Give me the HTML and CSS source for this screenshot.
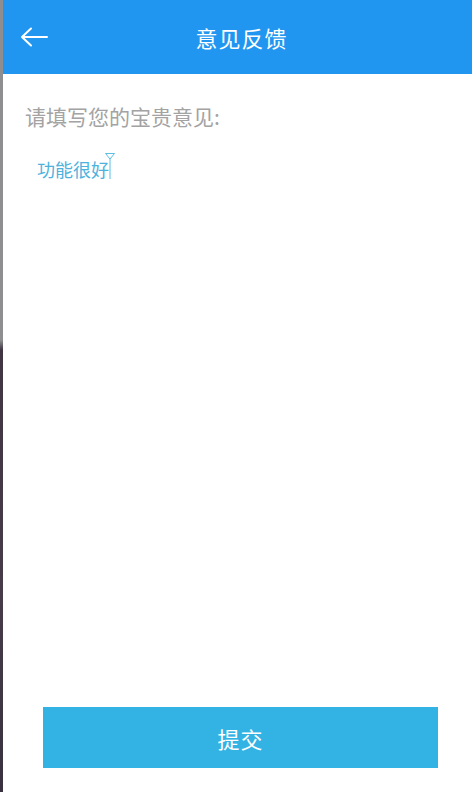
FILE: index.html
```html
<!DOCTYPE html>
<html lang="zh">
<head>
<meta charset="utf-8">
<title>意见反馈</title>
<link rel="stylesheet" href="styles.css">
</head>
<body>
<div class="frame">
  <div class="edge"></div>
  <div class="screen">
    <header class="appbar">
      <span class="back">
        <svg width="28" height="20" viewBox="0 0 28 20"><path d="M11 1.5 L2 10 L11 18.5 M2 10 H27" fill="none" stroke="#fff" stroke-width="2" stroke-linecap="round" stroke-linejoin="round"/></svg>
      </span>
      <h1 class="title">意见反馈</h1>
    </header>
    <main class="content">
      <p class="label">请填写您的宝贵意见:</p>
      <div class="input">功能很好<span class="caret"><svg width="10" height="26" viewBox="0 0 10 26"><path d="M0.5 0.5 H9.5 L5 6 Z" fill="none" stroke="#5bbde4" stroke-width="1"/><path d="M5 5 V26" stroke="#5bbde4" stroke-width="1"/></svg></span></div>
    </main>
    <footer class="actions">
      <button class="submit">提交</button>
    </footer>
  </div>
</div>
</body>
</html>
```
FILE: styles.css
```css
html, body {
  margin: 0;
  padding: 0;
  height: 100%;
}
body {
  font-family: "Noto Sans CJK SC", "Noto Sans", sans-serif;
  background: #fff;
}
.frame {
  display: flex;
  height: 792px;
  width: 472px;
}
.edge {
  width: 3px;
  flex: none;
  background: linear-gradient(to bottom, #8e8e90 0, #8e8e90 340px, #3f3642 350px, #453c48 600px, #3a3140 792px);
}
.screen {
  flex: 1;
  display: flex;
  flex-direction: column;
  background: #fff;
}
.appbar {
  height: 74px;
  background: #2196f0;
  display: flex;
  align-items: center;
  position: relative;
  flex: none;
}
.back {
  display: flex;
  margin-left: 17px;
}
.title {
  position: absolute;
  left: 0;
  right: 0;
  top: 0;
  margin: 0;
  line-height: 74px;
  text-align: center;
  font-size: 22px;
  font-weight: 400;
  color: #fff;
  padding-left: 8px;
  box-sizing: border-box;
  letter-spacing: 1px;
  pointer-events: none;
}
.content {
  flex: 1;
  padding: 28px 0 0 22px;
}
.label {
  margin: 0;
  font-size: 21px;
  line-height: 28px;
  color: #a3a3a3;
}
.input {
  margin: 27px 0 0 12px;
  font-size: 18px;
  line-height: 24px;
  color: #4eb2dd;
  display: flex;
  align-items: flex-start;
}
.caret {
  display: inline-flex;
  margin-left: -4px;
  margin-top: -4px;
}
.actions {
  flex: none;
  padding: 0 34px 24px 40px;
}
.submit {
  display: block;
  width: 100%;
  height: 61px;
  border: none;
  background: #33b3e3;
  color: #fff;
  font-family: "Noto Sans CJK SC", "Noto Sans", sans-serif;
  font-size: 22px;
  letter-spacing: 1px;
  padding: 0;
}
```
